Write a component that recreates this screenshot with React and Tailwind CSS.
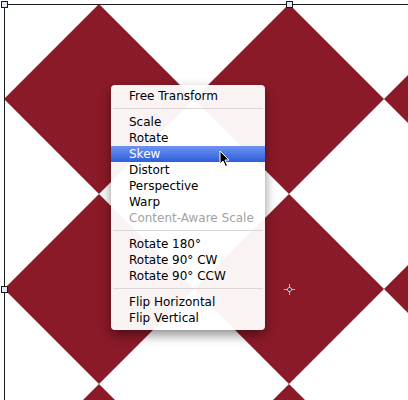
import React from 'react';

const RED = '#8b1a28';

const items = [
  { type: 'item', label: 'Free Transform' },
  { type: 'sep' },
  { type: 'item', label: 'Scale' },
  { type: 'item', label: 'Rotate' },
  { type: 'item', label: 'Skew', active: true },
  { type: 'item', label: 'Distort' },
  { type: 'item', label: 'Perspective' },
  { type: 'item', label: 'Warp' },
  { type: 'item', label: 'Content-Aware Scale', disabled: true },
  { type: 'sep' },
  { type: 'item', label: 'Rotate 180°' },
  { type: 'item', label: 'Rotate 90° CW' },
  { type: 'item', label: 'Rotate 90° CCW' },
  { type: 'sep' },
  { type: 'item', label: 'Flip Horizontal' },
  { type: 'item', label: 'Flip Vertical' },
];

function Canvas() {
  const diamonds = [];
  for (let i = 0; i < 3; i++) {
    for (let j = 0; j < 3; j++) {
      const cx = 99 + 190 * i;
      const cy = 99 + 190 * j;
      diamonds.push(
        <polygon
          key={`${i}-${j}`}
          points={`${cx},${cy - 95} ${cx + 95},${cy} ${cx},${cy + 95} ${cx - 95},${cy}`}
          fill={RED}
        />
      );
    }
  }
  return (
    <svg width="408" height="400" viewBox="0 0 408 400" className="absolute inset-0">
      <defs>
        <clipPath id="art">
          <rect x="5" y="5" width="403" height="395" />
        </clipPath>
      </defs>
      <rect width="408" height="400" fill="#ffffff" />
      <g clipPath="url(#art)">{diamonds}</g>
      {/* bounding box */}
      <line x1="4.5" y1="4.5" x2="408" y2="4.5" stroke="#1a1a1a" strokeWidth="1" />
      <line x1="4.5" y1="4.5" x2="4.5" y2="400" stroke="#1a1a1a" strokeWidth="1" />
      {[[4, 4], [289, 4], [4, 289]].map(([x, y]) => (
        <rect key={`${x}-${y}`} x={x - 2.5} y={y - 2.5} width="6" height="6" fill="#dfe8f5" stroke="#1a1a1a" strokeWidth="1" />
      ))}
      {/* reference point */}
      <g>
        <line x1="284" y1="289.5" x2="295" y2="289.5" stroke="#a7bccd" strokeWidth="1" />
        <line x1="289.5" y1="284" x2="289.5" y2="295" stroke="#a7bccd" strokeWidth="1" />
        <circle cx="289.5" cy="289.5" r="2" fill="#5a1a22" stroke="#c4d4e0" strokeWidth="1" />
      </g>
    </svg>
  );
}

function Cursor() {
  return (
    <svg width="12" height="18" viewBox="0 0 12 18" className="absolute left-[219px] top-[150px]">
      <path d="M1 1 L1 14 L4 11 L6.5 16.5 L8.5 15.5 L6 10 L10 10 Z" fill="#000" stroke="#fff" strokeWidth="1" strokeLinejoin="round" />
    </svg>
  );
}

export default function App() {
  return (
    <div className="relative w-[408px] h-[400px] overflow-hidden bg-white" style={{ fontFamily: '"DejaVu Sans", "Liberation Sans", sans-serif' }}>
      <Canvas />
      <div className="absolute left-[111px] top-[85px] w-[154px] rounded-[4px] bg-[rgba(255,255,255,0.95)] pt-[3px] pb-[4px] shadow-[0_5px_12px_rgba(0,0,0,0.45)]">
        {items.map((it, idx) =>
          it.type === 'sep' ? (
            <div key={idx} className="mx-[2px] mt-[4px] mb-[5px] h-px bg-[#ddd6d6]" />
          ) : (
            <div
              key={idx}
              className={`h-[16px] pl-[18px] flex items-center text-[12px] leading-none ${
                it.active
                  ? 'bg-gradient-to-b from-[#6f93f2] to-[#2c5ddb] text-white'
                  : it.disabled
                  ? 'text-[#a3a3a3]'
                  : 'text-black'
              }`}
            >
              {it.label}
            </div>
          )
        )}
      </div>
      <Cursor />
    </div>
  );
}
